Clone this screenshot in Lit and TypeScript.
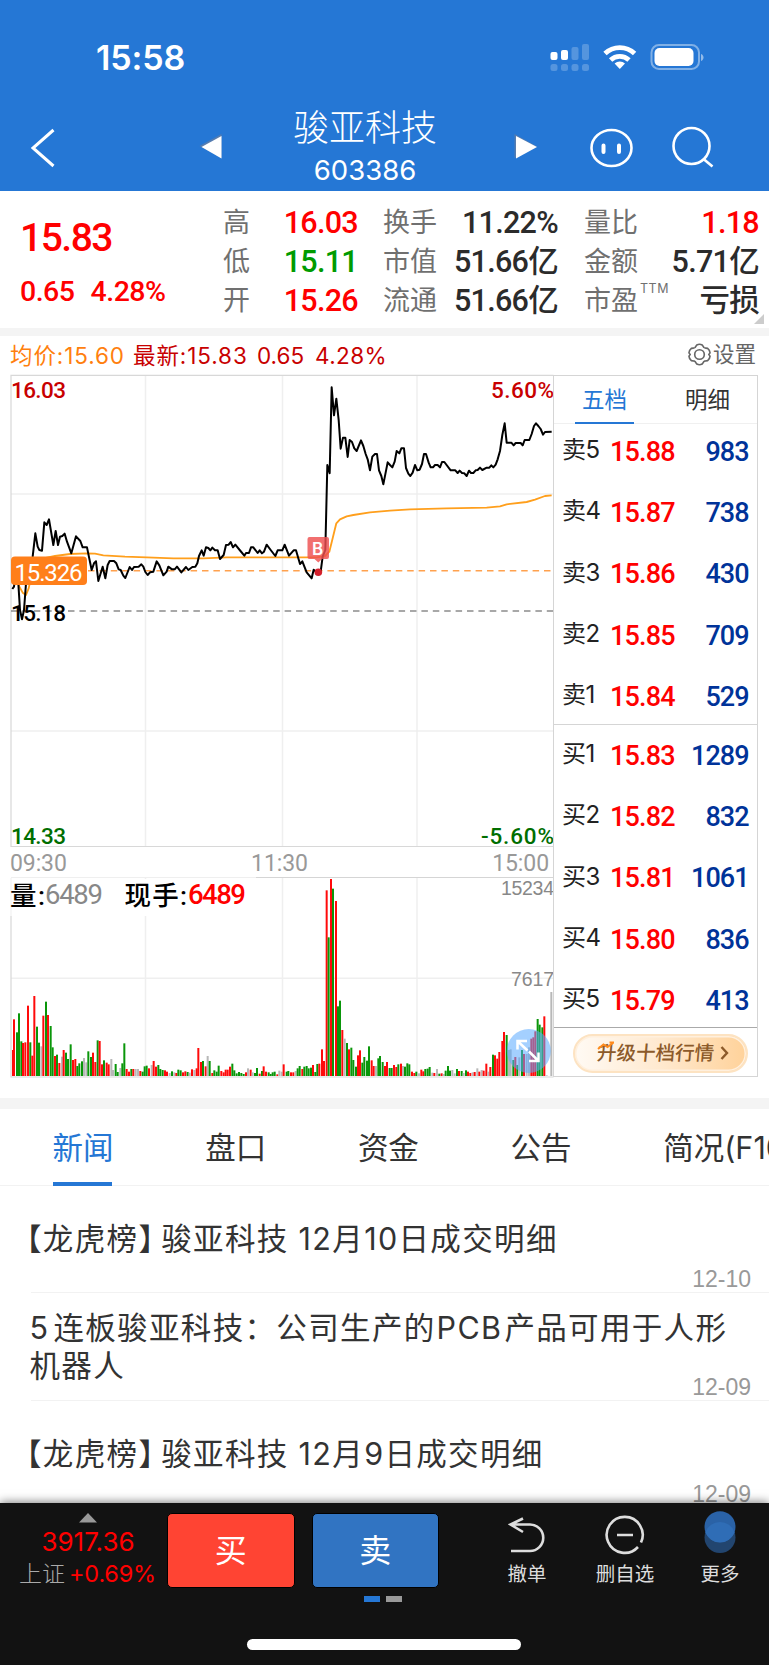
import { LitElement, html, svg, css } from "lit";
import { customElement } from "lit/decorators.js";

/* Chart coordinates are stored in thirds of a pixel. */
const PRICE =
  "37,657 42,650 48,600 55,640 60,720 66,748 72,720 78,640 90,590 98,560 106,490 113,530 118,540 126,542 133,457 140,465 147,448 160,525 167,483 174,525 180,500 187,498 194,491 201,515 214,550 228,499 241,513 248,532 261,532 275,600 282,580 288,574 295,633 308,590 316,625 323,585 329,573 342,573 349,580 356,598 362,600 370,617 376,624 389,591 396,600 402,591 416,590 424,583 430,590 436,606 443,615 450,607 460,605 470,574 478,586 490,616 500,605 505,590 516,598 524,598 531,590 544,607 558,591 565,600 577,591 586,590 592,580 597,558 605,541 611,557 618,532 625,534 631,541 637,533 645,541 653,541 660,567 671,555 678,525 686,524 692,516 699,532 706,524 719,540 733,557 738,549 747,549 753,532 760,532 773,549 779,541 786,550 792,545 800,524 812,540 826,558 833,541 847,541 854,524 867,557 881,541 888,541 900,582 907,574 920,607 935,625 941,599 950,607 962,605 968,560 976,540 982,285 989,310 995,52 1002,136 1009,86 1016,150 1022,236 1029,203 1036,203 1043,261 1049,210 1056,216 1063,235 1070,243 1083,211 1090,228 1097,252 1103,268 1110,301 1117,260 1125,252 1131,252 1137,301 1144,318 1150,343 1163,277 1170,285 1177,292 1184,275 1190,243 1198,250 1204,235 1212,235 1218,294 1225,311 1231,318 1238,308 1245,285 1252,301 1259,299 1266,282 1272,252 1278,252 1286,278 1292,292 1299,292 1305,285 1313,285 1320,292 1326,276 1333,276 1352,301 1366,301 1373,309 1379,302 1386,309 1393,310 1400,318 1407,302 1413,309 1420,309 1427,301 1433,300 1440,293 1447,300 1460,293 1468,293 1474,286 1480,292 1487,284 1493,268 1500,243 1507,195 1514,160 1520,218 1534,218 1541,226 1547,219 1562,219 1568,226 1574,210 1588,210 1595,192 1602,168 1608,160 1615,168 1622,177 1629,194 1635,186 1655,185";
const AVERAGE =
  "37,600 50,625 58,650 68,668 78,675 86,655 100,590 130,565 165,558 210,552 260,550 285,551 310,556 375,560 440,562 520,565 610,565 680,562 840,562 950,562 975,558 988,545 998,505 1009,460 1020,448 1040,439 1060,435 1110,427 1170,422 1230,418 1340,415 1460,413 1500,409 1520,403 1580,396 1605,389 1635,378 1655,376";
const VOLUME =
  "39,690r 42,598r 51,637g 57,580g 64,664g 69,669r 76,667r 84,557r 91,667g 97,707r 103,528r 111,620g 117,668g 124,679a 130,587r 138,545g 144,585r 152,618g 158,682g 165,708r 171,704g 178,729r 186,710a 191,690r 198,698g 204,717g 212,673g 219,720r 226,717r 232,738g 238,730g 246,724g 252,714a 259,727a 265,694g 273,711g 279,698r 286,726r 293,661g 299,663r 306,733r 312,721g 320,728r 326,733r 334,717a 339,750a 347,732g 353,756g 361,744a 367,730g 373,670g 380,747r 387,755r 394,747g 400,747r 407,747a 414,747a 421,753r 428,755g 434,739g 440,737g 447,745r 455,735a 461,723r 468,740r 475,735g 481,747g 488,750g 495,751r 501,755r 509,759a 516,754g 523,757a 529,759r 535,749g 542,751g 549,757r 556,754r 563,756g 569,758a 576,748r 583,750a 590,745r 595,684r 603,726r 609,723g 617,739r 623,708a 629,723g 637,759r 643,751g 650,755g 656,737g 664,753r 671,757r 677,749r 683,749r 690,740r 697,731g 703,751g 710,760g 717,756g 724,759g 731,762g 738,757r 744,745a 752,749r 758,757a 765,759g 771,744g 779,761r 786,753g 791,739r 798,755r 806,757g 812,762g 818,757g 824,755g 832,763r 838,752a 845,755a 851,733r 860,755g 865,753g 873,757r 880,757r 887,753a 893,745g 899,738g 907,747r 913,740g 920,738g 926,745g 933,743g 939,735r 946,756g 952,732g 958,731r 966,688r 972,723r 980,211r 986,352g 993,177r 999,206g 1008,243r 1014,559g 1020,542g 1027,630r 1034,656a 1041,669g 1047,688r 1054,683g 1060,720g 1068,740g 1074,706r 1080,691r 1087,728g 1093,711g 1101,722g 1107,679g 1115,721r 1121,738r 1128,738a 1135,715g 1140,708g 1148,726g 1155,738r 1161,726r 1169,744g 1175,744g 1182,735r 1189,741r 1195,733g 1203,731r 1209,738a 1215,740g 1222,730g 1228,733g 1236,755r 1243,759r 1249,755g 1257,760a 1264,749r 1270,754r 1276,747g 1283,746g 1289,741g 1297,758a 1303,759r 1311,747a 1318,761g 1325,760r 1331,762a 1337,752g 1344,738g 1350,752g 1357,750a 1364,760a 1371,747g 1377,753r 1385,753g 1391,759a 1398,751g 1404,755r 1411,759r 1418,757a 1424,756r 1432,745a 1438,755r 1445,750a 1451,752r 1459,731r 1465,755a 1471,741r 1479,704g 1485,706r 1492,716r 1498,696r 1507,663r 1512,636r 1520,645g 1527,690a 1532,688a 1540,720g 1546,711r 1552,735g 1558,712a 1566,690g 1572,702r 1580,702a 1587,682a 1594,656r 1600,652r 1606,634r 1613,597g 1619,614g 1627,622g 1633,589r 1640,766a 1654,516a";

const FILL: Record<string, string> = { r: "#ff0a0a", g: "#0a960a", a: "#b8b8b8" };
const BARS = VOLUME.split(" ").map((s) => {
  const [x, y] = s.slice(0, -1).split(",").map(Number);
  return { x, y, fill: FILL[s.slice(-1)] };
});

const SELLS = [["卖5", "15.88", "983"], ["卖4", "15.87", "738"], ["卖3", "15.86", "430"], ["卖2", "15.85", "709"], ["卖1", "15.84", "529"]];
const BUYS = [["买1", "15.83", "1289"], ["买2", "15.82", "832"], ["买3", "15.81", "1061"], ["买4", "15.80", "836"], ["买5", "15.79", "413"]];

@customElement("status-header")
class StatusHeader extends LitElement {
  static styles = css`
    :host { display: block; height: 191px; background: #2577d5; color: #fff; font-family: Inter, "Noto Sans CJK SC", sans-serif; }
    .status { display: flex; height: 104px; padding: 11px 63px 0 96px; box-sizing: border-box; justify-content: space-between; align-items: center; }
    .time { font-size: 34px; font-weight: 600; line-height: 40px; letter-spacing: -0.1px; }
    .radios { display: block; margin-top: -1px; }
    .bar { display: grid; grid-template-columns: 194px 36px 1fr 36px 47px 50px 33px 50px 50px; height: 87px; align-items: start; }
    .bar svg { display: block; overflow: visible; }
    .name { grid-column: 3; display: flex; flex-direction: column; align-items: center; padding: 2px 3px 0 0; }
    .title { font-size: 36px; line-height: 44px; font-weight: 300; }
    .code { font-size: 27.500px; line-height: 30px; margin-top: 5px; }
  `;
  render() {
    return html`
      <div class="status">
        <span class="time">15:58</span>
        <svg class="radios" width="156" height="30" viewBox="551 42 156 30" fill="#fff">
          <rect x="551.5" y="52" width="7" height="8" rx="2"></rect>
          <rect x="562" y="50" width="7" height="10" rx="2"></rect>
          <g opacity=".22">
            <rect x="572.5" y="47" width="7" height="13" rx="2"></rect>
            <rect x="583" y="44" width="7" height="16" rx="2"></rect>
            <rect x="551.5" y="64" width="7" height="7" rx="2.5"></rect>
            <rect x="562" y="64" width="7" height="7" rx="2.5"></rect>
            <rect x="572.5" y="64" width="7" height="7" rx="2.5"></rect>
            <rect x="583" y="64" width="7" height="7" rx="2.5"></rect>
          </g>
          <g fill="none" stroke="#fff" stroke-width="4.8">
            <path d="M606 53.6a21.5 21.5 0 0 1 29.6 0"></path>
            <path d="M611.6 60a13.5 13.5 0 0 1 18.4 0"></path>
          </g>
          <path d="M620.8 69l-5.2-5.4a7.4 7.4 0 0 1 10.4 0z"></path>
          <rect x="652.5" y="45" width="47.5" height="24" rx="7.5" fill="none" stroke="#fff" stroke-opacity=".42" stroke-width="2"></rect>
          <rect x="655.5" y="48" width="39" height="18" rx="5"></rect>
          <path d="M702 54c3.4 1.200 3.400 5.800 0 7z" opacity=".5"></path>
        </svg>
      </div>
      <div class="bar">
        <svg width="60" height="87" viewBox="0 104 60 87"><path d="M53.500 130L33 148l20.500 18" fill="none" stroke="#fff" stroke-width="3"></path></svg>
        <svg width="36" height="87" viewBox="194 104 36 87">
          <path d="M199.500 146L221.500 134V158z" fill="#697fa0" opacity=".7"></path>
          <path d="M201.500 147L221.500 136V158.500z" fill="#fff"></path>
        </svg>
        <div class="name">
          <div class="title">骏亚科技</div>
          <div class="code">603386</div>
        </div>
        <svg width="36" height="87" viewBox="503 104 36 87">
          <path d="M514.500 134L537 146.500L514.500 158z" fill="#697fa0" opacity=".7"></path>
          <path d="M516 136L537 147L516 158.500z" fill="#fff"></path>
        </svg>
        <span></span>
        <svg width="50" height="87" viewBox="587 104 50 87" fill="none" stroke="#fff" stroke-width="2.600">
          <rect x="592.500" y="130" width="40" height="36" rx="20" ry="18"></rect>
          <path d="M604.500 145.500v6.500M620 145.500v6.500" stroke-width="4" stroke-linecap="round"></path>
        </svg>
        <span></span>
        <svg width="50" height="87" viewBox="670 104 50 87" fill="none" stroke="#fff" stroke-width="2.600">
          <circle cx="692.500" cy="146" r="18"></circle>
          <path d="M704.500 159l9 7.500"></path>
        </svg>
      </div>
    `;
  }
}

@customElement("quote-summary")
class QuoteSummary extends LitElement {
  static styles = css`
    :host { display: flex; height: 137px; position: relative; font-family: Roboto, "Noto Sans CJK SC", sans-serif; font-weight: 500; }
    .now { width: 223px; color: #f00; box-sizing: border-box; padding: 23px 0 0 20px; }
    .price { font-size: 39px; line-height: 48px; letter-spacing: -1.500px; }
    .delta { font-size: 28.500px; line-height: 36px; margin-top: 12px; display: flex; gap: 16px; letter-spacing: -0.500px; }
    .group { display: grid; grid-auto-rows: 39px; padding-top: 13px; }
    .a { width: 135px; margin-right: 25px; }
    .b { width: 175px; margin-right: 26px; }
    .c { width: 175px; }
    .row { display: flex; justify-content: space-between; line-height: 38px; white-space: nowrap; }
    .key { font-size: 27px; font-weight: 400; color: #707070; font-family: Inter, "Noto Sans CJK SC", sans-serif; display: flex; }
    .val { font-size: 30.500px; color: #2b2b2b; letter-spacing: -0.700px; }
    .up { color: #f00; }
    .down { color: #009b00; }
    sup { font-size: 12.500px; line-height: 14px; margin: 0 0 0 2px; letter-spacing: .5px; }
    .corner { position: absolute; right: 5px; bottom: 4px; display: block; }
  `;
  row(key: unknown, value: string, tone = "") {
    return html`<div class="row"><span class="key">${key}</span><span class="val ${tone}">${value}</span></div>`;
  }
  render() {
    return html`
      <div class="now">
        <div class="price">15.83</div>
        <div class="delta"><span>0.65</span><span>4.28%</span></div>
      </div>
      <div class="group a">${this.row("高", "16.03", "up")}${this.row("低", "15.11", "down")}${this.row("开", "15.26", "up")}</div>
      <div class="group b">${this.row("换手", "11.22%")}${this.row("市值", "51.66亿")}${this.row("流通", "51.66亿")}</div>
      <div class="group c">${this.row("量比", "1.18", "up")}${this.row("金额", "5.71亿")}${this.row(html`市盈<sup>TTM</sup>`, "亏损")}</div>
      <svg class="corner" width="10" height="10"><path d="M10 0V10H0z" fill="#ccc"></path></svg>
    `;
  }
}

@customElement("trend-chart")
class TrendChart extends LitElement {
  static styles = css`
    :host { display: block; width: 545px; }
    svg { display: block; overflow: visible; }
    .num { font-family: Roboto, sans-serif; font-weight: 500; font-size: 22.500px; }
    .badge { font-size: 24px; font-weight: 400; }
    .axis { display: flex; justify-content: space-between; height: 30px; box-sizing: border-box; padding: 0 6px 0 0; font: 400 23px/33px Roboto, sans-serif; color: #999; letter-spacing: -0.1px; }
    .cap { font-family: Roboto, "Noto Sans CJK SC", sans-serif; font-weight: 500; font-size: 26.500px; }
    .cap .qty { font-size: 27.500px; }
    .cap .thin { font-weight: 400; }
    .scale { font-family: "Liberation Sans", sans-serif; font-size: 19.500px; fill: #888; }
    .mark { font-family: Inter, sans-serif; font-weight: 600; font-size: 17px; }
  `;
  render() {
    return html`
      <svg width="545" height="473" viewBox="10 374 545 473">
        <g stroke="#efefef" stroke-width="1.500"><path d="M145.500 376V846M282.500 376V846M417 376V846M11 494H553M11 731H553"></path></g>
        <path d="M11 847V375.300H553.500M11 846.500H553.500" fill="none" stroke="#d8d8d8" stroke-width="1.200"></path>
        <path d="M11 611H553" stroke="#8c8c8c" stroke-width="1.600" stroke-dasharray="6.500 4.900"></path>
        <path d="M88 570.700H553" stroke="#ffa14e" stroke-width="1.400" stroke-dasharray="6.500 4.900"></path>
        <g transform="translate(0 370) scale(.33333)" fill="none" stroke-linejoin="round">
          <polyline points=${AVERAGE} stroke="#ff9f1c" stroke-width="5.500"></polyline>
          <polyline points=${PRICE} stroke="#000" stroke-width="6"></polyline>
        </g>
        <g class="num">
          <text x="11" y="398" fill="#c80000" textLength="55">16.03</text>
          <text x="491" y="398" fill="#c80000" textLength="63">5.60%</text>
          <text x="11" y="621" textLength="55">15.18</text>
          <text x="11" y="844" fill="#006e00" textLength="55">14.33</text>
          <text x="481" y="844" fill="#006e00" textLength="73">-5.60%</text>
          <rect x="11" y="556.500" width="76" height="28.500" rx="4" fill="#ff7f1a"></rect>
          <text class="badge" x="14.500" y="580.500" fill="#fff" textLength="68">15.326</text>
        </g>
        <path d="M309.500 537h17.500a2 2 0 0 1 2 2v18a2 2 0 0 1-2 2h-5l-3.700 3.500l-3.800-3.500h-5a2 2 0 0 1-2-2v-18a2 2 0 0 1 2-2z" fill="#ee4f4f" opacity=".82"></path>
        <text class="mark" x="312" y="554.500" fill="#fff">B</text>
        <circle cx="318.300" cy="572.300" r="3.800" fill="#d4202c"></circle>
      </svg>
      <div class="axis"><span>09:30</span><span>11:30</span><span>15:00</span></div>
      <svg width="545" height="201" viewBox="10 877 545 201">
        <path d="M145.500 878V1077M282.500 878V1077M417 878V1077M11 978.300H553" stroke="#efefef" stroke-width="1.500"></path>
        <path d="M11 916V1077H553.500" fill="none" stroke="#d8d8d8" stroke-width="1.200"></path>
        <path d="M11 877.500H256M11 878v38" stroke="#efefef"></path>
        <path d="M256 877.500H553.500" stroke="#d5d5d5" stroke-width="1.200"></path>
        <rect x="12" y="879" width="236" height="37" fill="#fff"></rect>
        <g transform="translate(0 820) scale(.33333)">
          ${BARS.map((b) => svg`<rect x=${b.x - 3} y=${b.y} width="6" height=${768 - b.y} fill=${b.fill}></rect>`)}
        </g>
        <g class="cap">
          <text x="10" y="904.500" textLength="35">量:</text>
          <text class="qty thin" x="45" y="904" fill="#888" textLength="58">6489</text>
          <text x="124.500" y="904.500" textLength="62.500">现手:</text>
          <text class="qty" x="188" y="904" fill="#f00" textLength="58">6489</text>
        </g>
        <text class="scale" x="501" y="895" textLength="53">15234</text>
        <text class="scale" x="511" y="986" textLength="43">7617</text>
        <circle cx="528.800" cy="1051" r="22" fill="#5aaaff" opacity=".55"></circle>
        <path d="M517.500 1049.500V1041h9.500M518.500 1042l9 8.500M538.500 1052.500V1061h-9.500M537.500 1060l-8.500-8.500" fill="none" stroke="#fff" stroke-width="2.500"></path>
      </svg>
    `;
  }
}

@customElement("order-book")
class OrderBook extends LitElement {
  static styles = css`
    :host { display: flex; flex-direction: column; width: 204.500px; height: 702px; margin-left: -2px; box-sizing: border-box; border: 1px solid #d5d5d5; font-family: Inter, "Noto Sans CJK SC", sans-serif; }
    .tabs { display: flex; height: 48px; box-sizing: border-box; border-bottom: 1px solid #f0f0f0; padding-left: 21px; gap: 44px; font-size: 22.500px; line-height: 48px; color: #333; }
    .tab { width: 59px; text-align: center; }
    .on { color: #2577d5; border-bottom: 2px solid #2577d5; height: 46px; }
    .side { display: flex; flex-direction: column; }
    .sell { height: 297px; margin-top: -3px; padding-bottom: 6px; border-bottom: 1px solid #d5d5d5; }
    .buy { height: 303px; box-sizing: border-box; border-bottom: 1px solid #aaa; }
    .row { display: flex; flex: 0 0 61.300px; align-items: center; padding: 0 8px 0 8px; }
    .who { width: 48px; font-size: 24px; line-height: 30px; margin-top: -3px; color: #222; letter-spacing: -0.5px; }
    .price, .qty { font: 500 27px/32px Roboto, sans-serif; }
    .price { color: #f00; letter-spacing: -0.8px; }
    .qty { margin-left: auto; color: #003399; letter-spacing: -1px; }
    .foot { display: flex; flex: 1; padding-left: 19px; align-items: center; }
    .pill { display: flex; align-items: center; width: 175px; height: 39px; margin-top: 2px; box-sizing: border-box; border: 2px solid #fde3c2; border-radius: 20px; background: linear-gradient(90deg, #fffaf4, #ffe9cf 50%, #ffd29a); box-shadow: inset 0 0 0 1.500px #fff0de; padding-left: 22px; color: #8c5a2a; font-size: 19.500px; font-weight: 500; line-height: 35px; white-space: nowrap; position: relative; }
    .word { transform: skewX(-5deg); }
    .arrow { margin-left: 6px; }
    .spark { position: absolute; left: 22px; top: 5px; }
  `;
  rows(list: string[][]) {
    return list.map(([who, price, qty]) => html`<div class="row"><span class="who">${who}</span><span class="price">${price}</span><span class="qty">${qty}</span></div>`);
  }
  render() {
    return html`
      <div class="tabs"><div class="tab on">五档</div><div class="tab">明细</div></div>
      <div class="side sell">${this.rows(SELLS)}</div>
      <div class="side buy">${this.rows(BUYS)}</div>
      <div class="foot">
        <div class="pill">
          <span class="word">升级十档行情</span>
          <svg class="arrow" width="9" height="14" viewBox="0 0 9 14"><path d="M1.500 1l5.500 6l-5.500 6" fill="none" stroke="#8c5a2a" stroke-width="2.400"></path></svg>
          <svg class="spark" width="20" height="10" viewBox="0 0 20 10"><path d="M1 8l5.500-4.500l4 2.500L16 2M12.500 1.500H17" fill="none" stroke="#ff8a1c" stroke-width="2"></path></svg>
        </div>
      </div>
    `;
  }
}

@customElement("news-feed")
class NewsFeed extends LitElement {
  static styles = css`
    :host { display: block; height: 395px; overflow: hidden; font-family: Inter, "Noto Sans CJK SC", sans-serif; color: #333; }
    .tabs { display: flex; height: 78px; box-sizing: border-box; border-bottom: 1.500px solid #f2f2f2; border-top: 1px solid #f4f4f4; padding-left: 52.500px; }
    .tab { flex: 0 0 152.700px; font-size: 30.500px; line-height: 77px; white-space: nowrap; }
    .tab span { display: inline-block; height: 77px; width: 59px; box-sizing: border-box; }
    .on { color: #2577d5; }
    .on span { border-bottom: 4px solid #2577d5; line-height: 77px; }
    .item { height: 107.500px; box-sizing: border-box; margin-left: 31px; border-bottom: 1.500px solid #f2f2f2; display: flex; flex-direction: column; }
    .title { font-size: 30.500px; line-height: 37.500px; letter-spacing: 1.350px; white-space: nowrap; margin: 34px 0 0 -1.500px; }
    .two { margin-top: 16px; margin-bottom: -9px; }
    .date { margin: auto 18px 3px auto; font: 400 23px/20px "Liberation Sans", sans-serif; color: #999; }
    .lead { margin: 0 -9px 0 -18.500px; }
    .five { margin-right: 4px; }
    .pcb { margin: 0 2px 0 1px; }
  `;
  render() {
    return html`
      <div class="tabs">
        <div class="tab on"><span>新闻</span></div><div class="tab">盘口</div><div class="tab">资金</div><div class="tab">公告</div><div class="tab">简况(F10)</div>
      </div>
      <div class="item"><div class="title"><span class="lead">【龙虎榜】</span>骏亚科技 12月10日成交明细</div><div class="date">12-10</div></div>
      <div class="item"><div class="title two"><span class="five">5</span>连板骏亚科技：公司生产的<span class="pcb">PCB</span>产品可用于人形<br>机器人</div><div class="date">12-09</div></div>
      <div class="item"><div class="title"><span class="lead">【龙虎榜】</span>骏亚科技 12月9日成交明细</div><div class="date">12-09</div></div>
    `;
  }
}

@customElement("trade-bar")
class TradeBar extends LitElement {
  static styles = css`
    :host { display: flex; flex-direction: column; height: 162px; position: relative; background: #121212; box-shadow: 0 -1px 9px rgba(0,0,0,.5); font-family: Inter, "Noto Sans CJK SC", sans-serif; }
    .main { display: flex; height: 86px; padding-top: 10px; box-sizing: border-box; }
    .index { width: 167px; display: flex; flex-direction: column; align-items: center; color: #f00; }
    .up { display: block; margin-left: 9px; }
    .num { font-size: 26px; line-height: 38px; margin-left: 9px; }
    .chg { display: flex; gap: 4px; font-size: 23.500px; line-height: 26px; margin-left: 8px; letter-spacing: -0.2px; }
    .chg i { font-style: normal; font-weight: 300; color: #aaa; font-size: 23px; letter-spacing: 0; }
    .btn { width: 127.500px; height: 75px; box-sizing: border-box; border: 1.500px solid #000; border-radius: 5px; color: #fff; font-size: 32px; line-height: 73px; text-align: center; }
    .buy { background: #ff4433; margin-right: 17px; }
    .sell { background: #3174c2; }
    .tools { display: grid; grid-template-columns: 98px 98px 92px; margin: -1px 0 0 39px; }
    .tool { display: flex; flex-direction: column; align-items: center; font-size: 19.500px; line-height: 24px; color: #ddd; white-space: nowrap; }
    .tool svg { display: block; margin-bottom: 4px; overflow: visible; }
    .dots { display: flex; gap: 5.500px; margin: 7px 0 0 364px; }
    .dots span { width: 16px; height: 6px; background: #999; }
    .dots .cur { background: #2577d5; }
    .home { width: 274px; height: 11px; border-radius: 6px; background: #fff; margin: 37px auto 0 247px; }
  `;
  render() {
    return html`
      <div class="main">
        <div class="index">
          <svg class="up" width="18" height="10"><path d="M9 0L18 9.500H0z" fill="#999"></path></svg>
          <div class="num">3917.36</div>
          <div class="chg"><i>上证</i>+0.69%</div>
        </div>
        <div class="btn buy">买</div>
        <div class="btn sell">卖</div>
        <div class="tools">
          <div class="tool">
            <svg width="38" height="46" viewBox="509 1513 38 46"><path d="M524 1519.500L511.500 1525.500L524 1533M512 1525.500H531a13 13 0 0 1 0 26.500H512" fill="none" stroke="#ddd" stroke-width="2.600"></path></svg>
            撤单
          </div>
          <div class="tool">
            <svg width="40" height="46" viewBox="605.500 1513 40 46"><path d="M641.500 1543.500A18 18 0 1 0 638.500 1548M617.500 1536H633.500" fill="none" stroke="#ddd" stroke-width="2.600"></path></svg>
            删自选
          </div>
          <div class="tool">
            <svg width="32" height="46" viewBox="704.500 1513 32 46"><circle cx="720.500" cy="1538.500" r="15.500" fill="#22456f"></circle><circle cx="720.500" cy="1527.800" r="15.500" fill="#2a62a6"></circle><path d="M705.900 1533.200a15.500 15.500 0 0 1 29.200 0a15.500 15.500 0 0 1-29.200 0z" fill="#2f6db6"></path></svg>
            更多
          </div>
        </div>
      </div>
      <div class="dots"><span class="cur"></span><span></span></div>
      <div class="home"></div>
    `;
  }
}

@customElement("app-root")
class AppRoot extends LitElement {
  static styles = css`
    :host { display: block; width: 769px; height: 1665px; overflow: hidden; background: #fff; }
    .gap { height: 8px; background: #f4f4f4; }
    .wide { height: 9.500px; margin-top: 20px; }
    .info { display: flex; height: 38px; padding: 0 13px 0 10px; align-items: center; font: 400 22.500px/38px Inter, "Noto Sans CJK SC", sans-serif; color: #c80000; white-space: nowrap; }
    .info > span { padding-top: 2px; }
    .avg { color: #ff7f0e; width: 123px; letter-spacing: .9px; }
    .last { width: 124px; letter-spacing: .9px; }
    .diff { width: 58px; }
    .pct { letter-spacing: .4px; }
    .info > .set { display: flex; align-items: center; margin-left: auto; gap: 2px; font-size: 21.500px; color: #666; padding-top: 0; margin-top: -2px; }
    .charts { display: flex; align-items: flex-start; padding-left: 10px; }
    order-book { margin-top: 1px; }
  `;
  render() {
    return html`
      <status-header></status-header>
      <quote-summary></quote-summary>
      <div class="gap"></div>
      <div class="info">
        <span class="avg">均价:15.60</span><span class="last">最新:15.83</span><span class="diff">0.65</span><span class="pct">4.28%</span>
        <span class="set">
          <svg width="23" height="23" viewBox="0 0 24 24" fill="none" stroke="#666" stroke-width="1.700" stroke-linejoin="round">
            <path d="M9.200 2Q12 .5 14.800 2L16.600 4.700Q17.300 5.300 18.500 5.300L20.500 5.600Q22.800 7.500 23 10.300L21.700 12L23 13.700Q22.800 16.500 20.500 18.400L18.500 18.700Q17.300 18.700 16.600 19.300L14.800 22Q12 23.500 9.200 22L7.400 19.300Q6.700 18.700 5.500 18.700L3.500 18.400Q1.200 16.500 1 13.700L2.300 12L1 10.300Q1.200 7.500 3.500 5.600L5.500 5.300Q6.700 5.300 7.400 4.700z"></path>
            <circle cx="12" cy="12" r="5"></circle>
          </svg>
          设置
        </span>
      </div>
      <div class="charts"><trend-chart></trend-chart><order-book></order-book></div>
      <div class="gap wide"></div>
      <news-feed></news-feed>
      <trade-bar></trade-bar>
    `;
  }
}
